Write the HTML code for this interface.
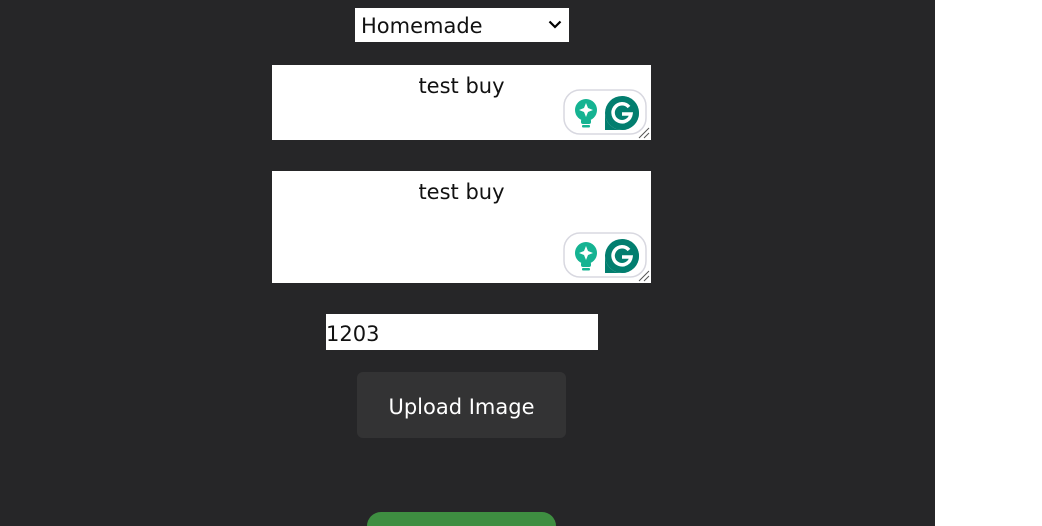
<!DOCTYPE html>
<html style="overflow:hidden;height:526px"><head><style>
body{margin:0;width:1042px;height:526px;overflow:hidden;background:#fff;font-family:"DejaVu Sans","Liberation Sans",sans-serif;position:relative;}
#dark{position:absolute;left:0;top:0;width:935px;height:526px;background:#262628;}
.a{position:absolute;}
.box{background:#fff;color:#111;}
</style></head><body>
<div id="dark"></div>
<div class="a box" style="left:355px;top:8px;width:214px;height:34px;font-size:21px;line-height:37px;">
<span style="margin-left:6px">Homemade</span>
<svg class="a" style="left:193px;top:12px" width="14" height="9"><path d="M1.5 1.5L7 7L12.5 1.5" stroke="#000" stroke-width="2.2" fill="none"/></svg>
</div>
<div class="a box" style="left:272px;top:65px;width:379px;height:75px;font-size:21px;text-align:center;line-height:42px;">test buy</div>
<div class="a box" style="left:272px;top:171px;width:379px;height:112px;font-size:21px;text-align:center;line-height:42px;">test buy</div>
<svg class="a" style="left:562px;top:88px" width="90" height="52">
<rect x="2" y="2" width="82" height="44" rx="16" fill="#fff" stroke="#d8d8e0" stroke-width="1.5"/>
<circle cx="24" cy="22" r="11" fill="#15b392"/><rect x="19" y="31" width="10" height="5" rx="2" fill="#15b392"/><rect x="20" y="37" width="8" height="2.5" rx="1" fill="#15b392"/>
<path d="M24 15L26 20L31 22L26 24L24 29L22 24L17 22L22 20Z" fill="#fff"/>
<path d="M60 8a17 17 0 1 1 -17 17v17h17z" fill="#027e6f"/><circle cx="60" cy="25" r="17" fill="#027e6f"/>
<path d="M67 19a9 9 0 1 0 2 7h-9" stroke="#fff" stroke-width="3.5" fill="none"/>
<path d="M77 50L87 40M82 50L87 45" stroke="#555" stroke-width="1"/>
</svg>
<svg class="a" style="left:562px;top:231px" width="90" height="52">
<rect x="2" y="2" width="82" height="44" rx="16" fill="#fff" stroke="#d8d8e0" stroke-width="1.5"/>
<circle cx="24" cy="22" r="11" fill="#15b392"/><rect x="19" y="31" width="10" height="5" rx="2" fill="#15b392"/><rect x="20" y="37" width="8" height="2.5" rx="1" fill="#15b392"/>
<path d="M24 15L26 20L31 22L26 24L24 29L22 24L17 22L22 20Z" fill="#fff"/>
<path d="M60 8a17 17 0 1 1 -17 17v17h17z" fill="#027e6f"/><circle cx="60" cy="25" r="17" fill="#027e6f"/>
<path d="M67 19a9 9 0 1 0 2 7h-9" stroke="#fff" stroke-width="3.5" fill="none"/>
<path d="M77 50L87 40M82 50L87 45" stroke="#555" stroke-width="1"/>
</svg>
<div class="a box" style="left:326px;top:314px;width:272px;height:36px;font-size:21px;line-height:40px;">1203</div>
<div class="a" style="left:357px;top:372px;width:209px;height:66px;background:#333334;border-radius:6px;color:#fff;font-size:21px;text-align:center;line-height:70px;">Upload Image</div>
<div class="a" style="left:367px;top:512px;width:189px;height:14px;background:#3e8e41;border-radius:22px 22px 0 0;"></div>
</body></html>
